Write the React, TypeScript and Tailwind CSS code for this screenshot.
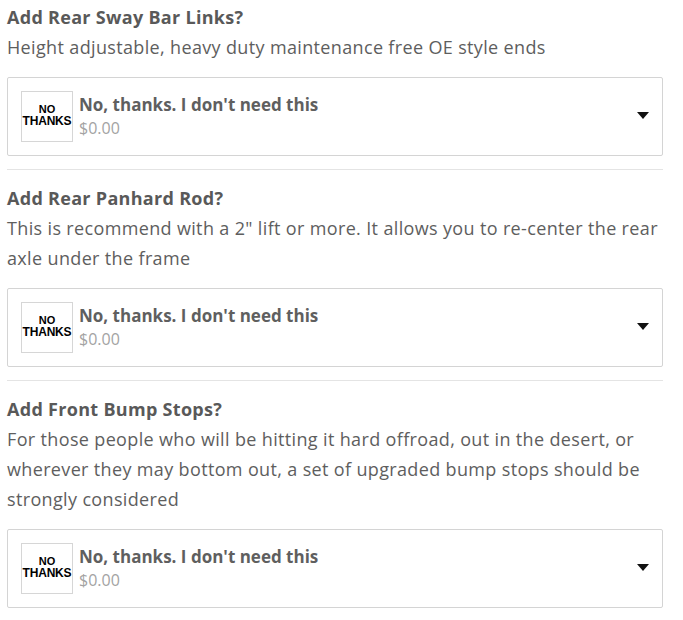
import React from 'react';

const addons = [
  {
    title: 'Add Rear Sway Bar Links?',
    desc: 'Height adjustable, heavy duty maintenance free OE style ends',
  },
  {
    title: 'Add Rear Panhard Rod?',
    desc: 'This is recommend with a 2" lift or more. It allows you to re-center the rear axle under the frame',
  },
  {
    title: 'Add Front Bump Stops?',
    desc: 'For those people who will be hitting it hard offroad, out in the desert, or wherever they may bottom out, a set of upgraded bump stops should be strongly considered',
  },
];

const NoThanksThumb: React.FC = () => (
  <div className="w-[52px] h-[51px] shrink-0 border border-[#d6d6d6] bg-white flex flex-col items-center justify-center pb-[3px] font-['Liberation_Sans',Arial,sans-serif] font-bold text-black">
    <span className="text-[11px] leading-[12px]">NO</span>
    <span className="text-[12px] leading-[12px] tracking-[-0.2px]">THANKS</span>
  </div>
);

const App: React.FC = () => {
  return (
    <div className="w-[683px] min-h-[620px] bg-white font-['Open_Sans',sans-serif]">
      <div className="w-[656px] ml-[7px] pt-[4px]">
        {addons.map((a, i) => (
          <div key={i}>
            {i > 0 && <div className="h-px bg-[#e4e4e4] mt-[13px] mb-[15px]" />}
            <h3 className="text-[18px] leading-[26px] tracking-[0.3px] font-bold text-[#595959] mb-[2px]">{a.title}</h3>
            <p className="text-[18px] leading-[30px] tracking-[0.35px] text-[#5e5e5e] mb-[15px]">{a.desc}</p>
            <div className="h-[79px] border border-[#d4d4d4] rounded-[2px] px-[13px] flex items-center">
              <NoThanksThumb />
              <div className="ml-[6px] flex-1 flex flex-col -mt-[2px]">
                <span className="text-[17px] leading-[24px] font-bold text-[#5f5f5f]">No, thanks. I don't need this</span>
                <span className="text-[16px] leading-[22px] text-[#a3a3a3]">$0.00</span>
              </div>
              <svg width="12" height="7" viewBox="0 0 12 7" className="-mt-[2px]">
                <path d="M0 0h12L6 7z" fill="#111" />
              </svg>
            </div>
          </div>
        ))}
      </div>
    </div>
  );
};

export default App;
